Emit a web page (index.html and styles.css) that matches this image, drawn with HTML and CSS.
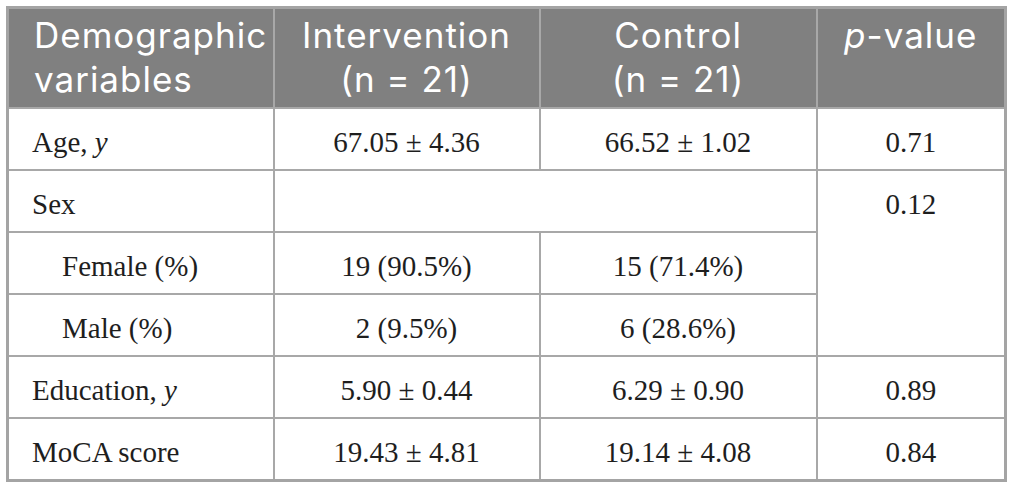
FILE: index.html
```html
<!DOCTYPE html>
<html>
<head>
<meta charset="utf-8">
<link rel="stylesheet" href="styles.css">
</head>
<body>
<table class="data">
  <colgroup>
    <col class="c1"><col class="c2"><col class="c3"><col class="c4">
  </colgroup>
  <thead>
    <tr>
      <th class="left">Demographic<br>variables</th>
      <th>Intervention<br>(n = 21)</th>
      <th>Control<br>(n = 21)</th>
      <th><i>p</i>-value</th>
    </tr>
  </thead>
  <tbody>
    <tr>
      <td class="left">Age, <i>y</i></td>
      <td>67.05 ± 4.36</td>
      <td>66.52 ± 1.02</td>
      <td>0.71</td>
    </tr>
    <tr>
      <td class="left">Sex</td>
      <td colspan="2"></td>
      <td rowspan="3">0.12</td>
    </tr>
    <tr>
      <td class="left sub">Female (%)</td>
      <td>19 (90.5%)</td>
      <td>15 (71.4%)</td>
    </tr>
    <tr>
      <td class="left sub">Male (%)</td>
      <td>2 (9.5%)</td>
      <td>6 (28.6%)</td>
    </tr>
    <tr>
      <td class="left">Education, <i>y</i></td>
      <td>5.90 ± 0.44</td>
      <td>6.29 ± 0.90</td>
      <td>0.89</td>
    </tr>
    <tr>
      <td class="left">MoCA score</td>
      <td>19.43 ± 4.81</td>
      <td>19.14 ± 4.08</td>
      <td>0.84</td>
    </tr>
  </tbody>
</table>
</body>
</html>
```
FILE: styles.css
```css
html, body {
  margin: 0;
  padding: 0;
  background: #ffffff;
}
body {
  padding: 6px 6px 0 6px;
}
.data {
  border-collapse: collapse;
  width: 998px;
  table-layout: fixed;
  border: 3px solid #a4a4a4;
}
.c1 { width: 266px; }
.c2 { width: 266px; }
.c3 { width: 277px; }
.c4 { width: 189px; }
.data th {
  background: #808080;
  color: #ffffff;
  font-family: Inter, Lato, sans-serif;
  font-weight: 400;
  font-size: 35px;
  letter-spacing: 1px;
  line-height: 44px;
  text-align: center;
  vertical-align: top;
  padding: 4px 2px 6px;
  border: 2px solid #a8a8a8;
  white-space: nowrap;
}
.data th.left {
  text-align: left;
  padding-left: 25px;
}
.data td {
  font-family: "Liberation Serif", "Times New Roman", serif;
  font-size: 29px;
  line-height: 32px;
  color: #1e1e1e;
  text-align: center;
  vertical-align: top;
  padding: 17px 8px 11px;
  border: 2px solid #a8a8a8;
  white-space: nowrap;
}
.data td.left {
  text-align: left;
  padding-left: 23px;
}
.data td.sub {
  padding-left: 53px;
}
```
